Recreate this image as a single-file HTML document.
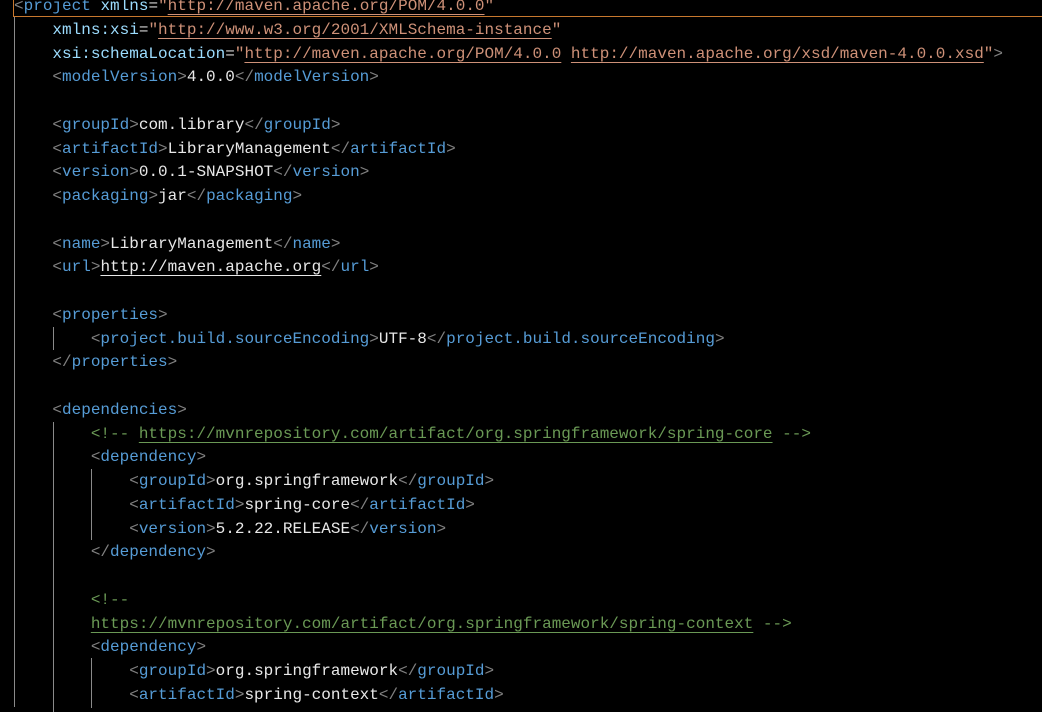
<!DOCTYPE html>
<html><head><meta charset="utf-8"><style>
html,body{margin:0;padding:0;background:#000;width:1042px;height:701px;overflow:hidden}
#c{position:absolute;left:14px;top:-5px;font-family:"Liberation Mono",monospace;font-size:16px;line-height:23.75px;white-space:pre;color:#d4d4d4}
.b{color:#808080}.t{color:#569cd6}.a{color:#9cdcfe}.s{color:#ce9178}
.u{text-decoration:underline;text-underline-offset:4px}
.g{color:#6a9955}
.w{color:#e8e8e8}
.gd{position:absolute;width:1px;background:#8a8a8a}
#hl{position:absolute;left:13px;top:-2px;right:-2px;height:18px;border:1px solid #c8782e;border-top:none}
</style></head><body>
<div id="hl"></div>
<div class="gd" style="left:14px;top:17px;height:690px"></div>
<div class="gd" style="left:53px;top:327px;height:23px"></div>
<div class="gd" style="left:53px;top:422px;height:290px"></div>
<div class="gd" style="left:91px;top:469px;height:71px"></div>
<div class="gd" style="left:91px;top:658px;height:50px"></div>
<div id="c"><span class="b">&lt;</span><span class="t">project</span> <span class="a">xmlns</span>=<span class="s">"<span class="u">http://maven.apache.org/POM/4.0.0</span>"</span>
    <span class="a">xmlns:xsi</span>=<span class="s">"<span class="u">http://www.w3.org/2001/XMLSchema-instance</span>"</span>
    <span class="a">xsi:schemaLocation</span>=<span class="s">"<span class="u">http://maven.apache.org/POM/4.0.0</span> <span class="u">http://maven.apache.org/xsd/maven-4.0.0.xsd</span>"</span><span class="b">&gt;</span>
    <span class="b">&lt;</span><span class="t">modelVersion</span><span class="b">&gt;</span><span class="w">4.0.0</span><span class="b">&lt;/</span><span class="t">modelVersion</span><span class="b">&gt;</span>

    <span class="b">&lt;</span><span class="t">groupId</span><span class="b">&gt;</span><span class="w">com.library</span><span class="b">&lt;/</span><span class="t">groupId</span><span class="b">&gt;</span>
    <span class="b">&lt;</span><span class="t">artifactId</span><span class="b">&gt;</span><span class="w">LibraryManagement</span><span class="b">&lt;/</span><span class="t">artifactId</span><span class="b">&gt;</span>
    <span class="b">&lt;</span><span class="t">version</span><span class="b">&gt;</span><span class="w">0.0.1-SNAPSHOT</span><span class="b">&lt;/</span><span class="t">version</span><span class="b">&gt;</span>
    <span class="b">&lt;</span><span class="t">packaging</span><span class="b">&gt;</span><span class="w">jar</span><span class="b">&lt;/</span><span class="t">packaging</span><span class="b">&gt;</span>

    <span class="b">&lt;</span><span class="t">name</span><span class="b">&gt;</span><span class="w">LibraryManagement</span><span class="b">&lt;/</span><span class="t">name</span><span class="b">&gt;</span>
    <span class="b">&lt;</span><span class="t">url</span><span class="b">&gt;</span><span class="w u">http://maven.apache.org</span><span class="b">&lt;/</span><span class="t">url</span><span class="b">&gt;</span>

    <span class="b">&lt;</span><span class="t">properties</span><span class="b">&gt;</span>
        <span class="b">&lt;</span><span class="t">project.build.sourceEncoding</span><span class="b">&gt;</span><span class="w">UTF-8</span><span class="b">&lt;/</span><span class="t">project.build.sourceEncoding</span><span class="b">&gt;</span>
    <span class="b">&lt;/</span><span class="t">properties</span><span class="b">&gt;</span>

    <span class="b">&lt;</span><span class="t">dependencies</span><span class="b">&gt;</span>
        <span class="g">&lt;!-- <span class="u">https://mvnrepository.com/artifact/org.springframework/spring-core</span> --&gt;</span>
        <span class="b">&lt;</span><span class="t">dependency</span><span class="b">&gt;</span>
            <span class="b">&lt;</span><span class="t">groupId</span><span class="b">&gt;</span><span class="w">org.springframework</span><span class="b">&lt;/</span><span class="t">groupId</span><span class="b">&gt;</span>
            <span class="b">&lt;</span><span class="t">artifactId</span><span class="b">&gt;</span><span class="w">spring-core</span><span class="b">&lt;/</span><span class="t">artifactId</span><span class="b">&gt;</span>
            <span class="b">&lt;</span><span class="t">version</span><span class="b">&gt;</span><span class="w">5.2.22.RELEASE</span><span class="b">&lt;/</span><span class="t">version</span><span class="b">&gt;</span>
        <span class="b">&lt;/</span><span class="t">dependency</span><span class="b">&gt;</span>

        <span class="g">&lt;!--</span>
        <span class="g"><span class="u">https://mvnrepository.com/artifact/org.springframework/spring-context</span> --&gt;</span>
        <span class="b">&lt;</span><span class="t">dependency</span><span class="b">&gt;</span>
            <span class="b">&lt;</span><span class="t">groupId</span><span class="b">&gt;</span><span class="w">org.springframework</span><span class="b">&lt;/</span><span class="t">groupId</span><span class="b">&gt;</span>
            <span class="b">&lt;</span><span class="t">artifactId</span><span class="b">&gt;</span><span class="w">spring-context</span><span class="b">&lt;/</span><span class="t">artifactId</span><span class="b">&gt;</span>
</div>
</body></html>
